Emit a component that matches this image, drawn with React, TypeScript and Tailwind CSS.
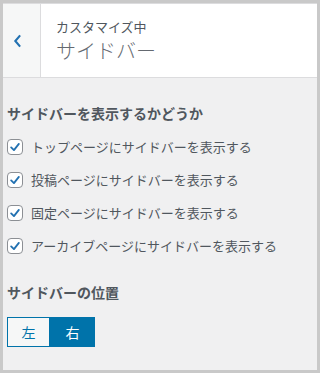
const font = { fontFamily: '"Noto Sans CJK JP", "Noto Sans", sans-serif' };

const options = [
  'トップページにサイドバーを表示する',
  '投稿ページにサイドバーを表示する',
  '固定ページにサイドバーを表示する',
  'アーカイブページにサイドバーを表示する',
];

const Check = () => (
  <span className="flex h-[16px] w-[16px] shrink-0 items-center justify-center rounded-[4px] border border-[#8c8f94] bg-white">
    <svg viewBox="0 0 20 20" className="h-[16px] w-[16px]">
      <path d="M4.5 10.5 L8.5 14.5 L15.5 5.5" fill="none" stroke="#2271b1" strokeWidth="2.6" strokeLinecap="round" strokeLinejoin="round" />
    </svg>
  </span>
);

export default function App() {
  return (
    <div className="h-[373px] w-[320px] border-[3px] border-[#c9c9c9] bg-[#f0f0f1] text-[#50575e]" style={font}>
      <div className="flex h-[75px] border-t border-b border-[#dcdcde] bg-white">
        <div className="flex w-[38px] items-center border-r border-[#dcdcde] bg-[#f6f7f7] pl-[10px]">
          <svg viewBox="0 0 10 16" className="h-[14px] w-[9px]">
            <path d="M8 1.5 L2.5 8 L8 14.5" fill="none" stroke="#2271b1" strokeWidth="2.4" />
          </svg>
        </div>
        <div className="flex flex-col pl-[15px] pt-[13px]">
          <span className="text-[13px] leading-[20px] text-[#50575e]">カスタマイズ中</span>
          <span className="text-[20px] font-light leading-[28px] text-[#646970]">サイドバー</span>
        </div>
      </div>

      <div className="px-[4px]">
        <h2 className="pt-[25px] text-[14px] font-bold leading-[20px] text-[#50575e]">サイドバーを表示するかどうか</h2>
        <ul className="mt-[14px] flex flex-col gap-[13px]">
          {options.map((o) => (
            <li key={o} className="flex h-[20px] items-center gap-[8px] text-[13px]">
              <Check />
              <span>{o}</span>
            </li>
          ))}
        </ul>

        <h2 className="pt-[26px] text-[14px] font-bold leading-[20px] text-[#50575e]">サイドバーの位置</h2>
        <div className="mt-[15px] flex">
          <button className="h-[30px] w-[43px] border border-[#0073aa] bg-[#f6f7f7] text-[14px] text-[#0073aa]">左</button>
          <button className="h-[30px] w-[45px] bg-[#0073aa] text-[14px] text-white">右</button>
        </div>
      </div>
    </div>
  );
}
